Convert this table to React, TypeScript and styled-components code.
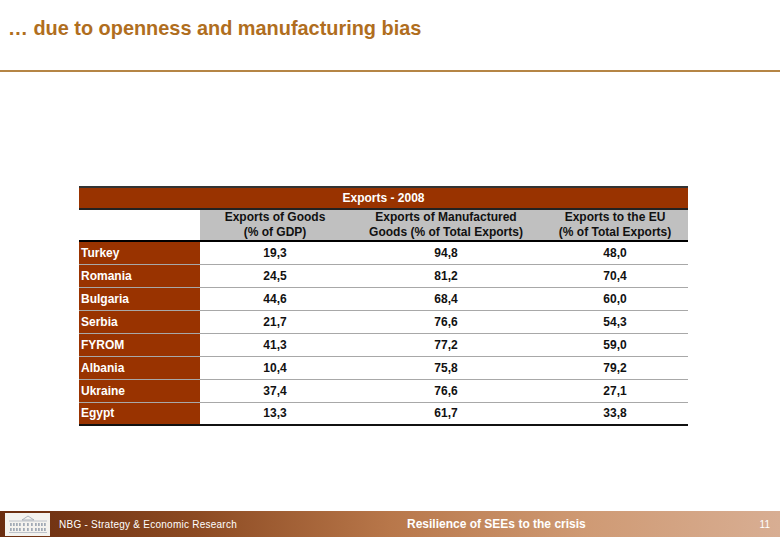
import React from 'react';
import styled, { createGlobalStyle } from 'styled-components';

const GlobalStyle = createGlobalStyle`
  html, body {
    margin: 0;
    padding: 0;
    background: #ffffff;
    font-family: "Liberation Sans", Arial, sans-serif;
  }
`;

const Page = styled.div`
  width: 780px;
  height: 540px;
  display: flex;
  flex-direction: column;
  overflow: hidden;
`;

const Title = styled.h1`
  margin: 0;
  padding: 17px 0 0 8px;
  height: 36px;
  font-size: 19.9px;
  font-weight: 700;
  color: #b06e1e;
`;

const Rule = styled.div`
  margin-top: 17px;
  height: 2px;
  background: #b58545;
`;

const Body = styled.div`
  flex: 1;
  padding: 114px 0 0 79px;
`;

const Table = styled.table`
  width: 609px;
  border-collapse: collapse;
  table-layout: fixed;
  font-size: 12px;
  font-weight: 700;
  border-top: 2px solid #333;
  border-bottom: 2px solid #111;
`;

const Caption = styled.th`
  background: #993300;
  color: #fff;
  height: 20px;
  padding: 0;
  font-size: 12px;
  border-bottom: 2px solid #222;
`;

const Head = styled.th<{ $blank?: boolean }>`
  background: ${({ $blank }) => ($blank ? '#ffffff' : '#c0c0c0')};
  color: #111;
  height: 29px;
  padding: 0;
  font-size: 12px;
  line-height: 15px;
  font-weight: 700;
  border-bottom: 2px solid #000;
`;

const Row = styled.tr`
  height: 23px;
  & + & td {
    border-top: 1px solid #a8a8a8;
  }
`;

const Country = styled.td`
  background: #993300;
  color: #fff;
  padding: 0 0 0 2px;
  text-align: left;
`;

const Value = styled.td`
  color: #111;
  text-align: center;
  padding: 0;
`;

const Footer = styled.div`
  height: 26px;
  margin-bottom: 3px;
  display: flex;
  align-items: center;
  background: linear-gradient(90deg, #6a2d0f 0%, #8c4a22 25%, #b8774a 50%, #cf9a74 75%, #d8ae93 100%);
  color: #fff;
`;

const Logo = styled.div`
  width: 45px;
  height: 23px;
  margin: 0 9px 0 5px;
  background: #f4f2ee;
  display: flex;
  align-items: center;
  justify-content: center;
`;

const FootLeft = styled.span`
  font-size: 10px;
  letter-spacing: 0.25px;
  width: 348px;
`;

const FootMid = styled.span`
  font-size: 12px;
  font-weight: 700;
  flex: 1;
`;

const PageNo = styled.span`
  font-size: 10px;
  margin-right: 10px;
`;

const rows: [string, string, string, string][] = [
  ['Turkey', '19,3', '94,8', '48,0'],
  ['Romania', '24,5', '81,2', '70,4'],
  ['Bulgaria', '44,6', '68,4', '60,0'],
  ['Serbia', '21,7', '76,6', '54,3'],
  ['FYROM', '41,3', '77,2', '59,0'],
  ['Albania', '10,4', '75,8', '79,2'],
  ['Ukraine', '37,4', '76,6', '27,1'],
  ['Egypt', '13,3', '61,7', '33,8'],
];

const BuildingIcon = () => (
  <svg width="40" height="20" viewBox="0 0 40 20">
    <path d="M14 6 L20 2 L26 6 Z" fill="none" stroke="#9aa3b0" strokeWidth="0.8" />
    <line x1="1" y1="7" x2="39" y2="7" stroke="#b0b6c0" strokeWidth="0.8" />
    {[3, 6, 9, 12, 16, 20, 24, 28, 31, 34, 37].map((x) => (
      <g key={x}>
        <rect x={x - 0.8} y="9" width="1.4" height="3" fill="#8e98a8" />
        <rect x={x - 0.8} y="14" width="1.4" height="3" fill="#8e98a8" />
      </g>
    ))}
    <line x1="1" y1="18.5" x2="39" y2="18.5" stroke="#b0b6c0" strokeWidth="0.8" />
  </svg>
);

export default function App() {
  return (
    <Page>
      <GlobalStyle />
      <Title>… due to openness and manufacturing bias</Title>
      <Rule />
      <Body>
        <Table>
          <colgroup>
            <col style={{ width: 121 }} />
            <col style={{ width: 150 }} />
            <col style={{ width: 192 }} />
            <col style={{ width: 146 }} />
          </colgroup>
          <thead>
            <tr>
              <Caption colSpan={4}>Exports - 2008</Caption>
            </tr>
            <tr>
              <Head $blank />
              <Head>
                Exports of Goods
                <br />
                (% of GDP)
              </Head>
              <Head>
                Exports of Manufactured
                <br />
                Goods (% of Total Exports)
              </Head>
              <Head>
                Exports to the EU
                <br />
                (% of Total Exports)
              </Head>
            </tr>
          </thead>
          <tbody>
            {rows.map(([name, a, b, c]) => (
              <Row key={name}>
                <Country>{name}</Country>
                <Value>{a}</Value>
                <Value>{b}</Value>
                <Value>{c}</Value>
              </Row>
            ))}
          </tbody>
        </Table>
      </Body>
      <Footer>
        <Logo>
          <BuildingIcon />
        </Logo>
        <FootLeft>NBG - Strategy &amp; Economic Research</FootLeft>
        <FootMid>Resilience of SEEs to the crisis</FootMid>
        <PageNo>11</PageNo>
      </Footer>
    </Page>
  );
}
